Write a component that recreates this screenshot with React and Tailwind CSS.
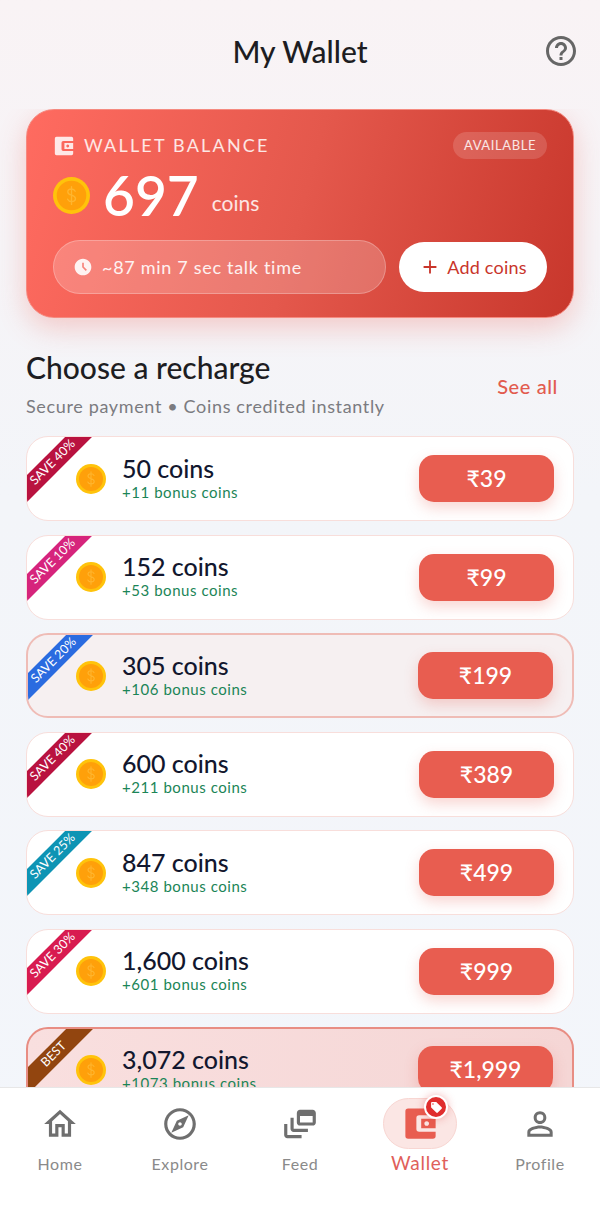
import React from "react";
import {
  MdHelpOutline, MdOutlineHome, MdOutlineExplore, MdOutlineDynamicFeed,
  MdOutlinePersonOutline, MdAccessTimeFilled, MdAdd, MdLocalOffer,
} from "react-icons/md";

const PACKS = [
  { coins: "50 coins", bonus: "+11 bonus coins", price: "₹39", tag: "SAVE 40%", ribbon: "bg-[#b9123f]" },
  { coins: "152 coins", bonus: "+53 bonus coins", price: "₹99", tag: "SAVE 10%", ribbon: "bg-[#d6247c]" },
  { coins: "305 coins", bonus: "+106 bonus coins", price: "₹199", tag: "SAVE 20%", ribbon: "bg-[#2a6be0]", tone: "soft" },
  { coins: "600 coins", bonus: "+211 bonus coins", price: "₹389", tag: "SAVE 40%", ribbon: "bg-[#b9123f]" },
  { coins: "847 coins", bonus: "+348 bonus coins", price: "₹499", tag: "SAVE 25%", ribbon: "bg-[#0e94b4]" },
  { coins: "1,600 coins", bonus: "+601 bonus coins", price: "₹999", tag: "SAVE 30%", ribbon: "bg-[#d81b50]" },
  { coins: "3,072 coins", bonus: "+1073 bonus coins", price: "₹1,999", tag: "BEST", ribbon: "bg-[#92450f]", tone: "best" },
];

const TONES = {
  plain: "bg-white border border-[#f8dedb] pl-[49px]",
  soft: "bg-[#f6f0f1] border-2 border-[#efbcb6] pl-[48px]",
  best: "bg-gradient-to-r from-[#f9dfdf] to-[#f5d6d5] border-2 border-[#e88d83] pl-[48px]",
};

function Coin({ size }) {
  return (
    <svg width={size} height={size} viewBox="0 0 30 30" className="shrink-0">
      <circle cx="15" cy="15" r="15" fill="#ffc30b" />
      <circle cx="15" cy="15" r="12" fill="#ffa00a" />
      <path
        d="M18 11.5c-.6-1.2-1.7-1.8-3-1.8-1.7 0-3 .9-3 2.4 0 3.4 6.2 1.9 6.2 5.3 0 1.5-1.4 2.5-3.2 2.5-1.4 0-2.6-.7-3.2-1.9M15 7.8v14.4"
        fill="none"
        stroke="#ffb52e"
        strokeWidth="1.1"
        strokeLinecap="round"
      />
    </svg>
  );
}

// Solid wallet with an outlined clasp on its right side.
function WalletGlyph({ size, className }) {
  return (
    <svg width={size} height={size} viewBox="0 0 24 24" className={className}>
      <path
        fillRule="evenodd"
        fill="currentColor"
        d="M3 1h18a2 2 0 0 1 2 2v18a2 2 0 0 1-2 2H3a2 2 0 0 1-2-2V3a2 2 0 0 1 2-2zM11 6a2 2 0 0 0-2 2v8a2 2 0 0 0 2 2h12V6zM12.5 8.5H23v7H12.5zM16.5 10.3a1.7 1.7 0 1 0 .01 0z"
      />
    </svg>
  );
}

function PackCard({ pack }) {
  const tone = TONES[pack.tone || "plain"];
  return (
    <div className={`relative h-[85px] shrink-0 overflow-hidden rounded-[22px] flex items-center pr-[19px] ${tone}`}>
      <div className={`absolute left-[-30px] top-[16px] w-[112px] h-[19px] -rotate-45 flex items-center justify-center text-white text-[12.5px] leading-none ${pack.ribbon}`}>
        {pack.tag}
      </div>
      <Coin size={30} />
      <div className="ml-[16px] -mt-[3px] flex flex-col">
        <span className="text-[25px] leading-[29px] font-medium text-[#12172e]">{pack.coins}</span>
        <span className="text-[15px] leading-[18px] tracking-[0.55px] text-[#1b8557]">{pack.bonus}</span>
      </div>
      <button className="ml-auto w-[135px] h-[47px] rounded-[15px] bg-[#e85d50] text-white text-[23px] font-medium flex items-center justify-center shadow-[0_6px_14px_rgba(232,93,80,0.25)]">
        {pack.price}
      </button>
    </div>
  );
}

function NavItem({ icon: Icon, label }) {
  return (
    <div className="flex-1 flex flex-col items-center pt-[17px]">
      <Icon size={38} className="text-[#6f6f6f]" />
      <span className="mt-[11px] text-[16px] leading-[20px] tracking-[0.55px] text-[#8a8a8a]">{label}</span>
    </div>
  );
}

export default function App() {
  return (
    <div className="w-[600px] h-[1232px] overflow-hidden flex flex-col bg-gradient-to-b from-[#f9f3f5] via-[#f3f5f9] via-40% to-[#f3f6fb] font-['Lato','Noto_Sans',sans-serif]">
      <header className="h-[109px] shrink-0 px-[21px] pb-[7px] relative flex items-center justify-center">
        <h1 className="text-[30px] font-medium text-[#1d1d22]">My Wallet</h1>
        <MdHelpOutline size={36} className="absolute right-[21px] top-[33px] text-[#666]" />
      </header>

      <main className="flex-1 min-h-0 overflow-hidden px-[26px] flex flex-col">
        <section className="h-[209px] shrink-0 rounded-[28px] border border-[#f58a80] bg-[linear-gradient(105deg,#ff6b60_0%,#e4584c_50%,#c8372c_100%)] px-[26px] pt-[22px] shadow-[0_10px_28px_rgba(236,90,80,0.28)]">
          <div className="flex items-center justify-between h-[27px]">
            <div className="flex items-center">
              <WalletGlyph size={20} className="text-white/85 ml-[1px]" />
              <span className="ml-[10px] text-[18px] tracking-[2.2px] text-white/85">WALLET BALANCE</span>
            </div>
            <span className="w-[94px] h-[27px] rounded-full bg-white/15 text-white/85 text-[13px] tracking-[0.6px] flex items-center justify-center">AVAILABLE</span>
          </div>
          <div className="flex items-center mt-[8px] h-[56px]">
            <Coin size={37} />
            <span className="ml-[13px] text-[55px] leading-none font-semibold text-white">697</span>
            <span className="ml-[13px] mt-[16px] text-[21px] text-white/85">coins</span>
          </div>
          <div className="flex items-center justify-between mt-[17px]">
            <div className="w-[333px] h-[54px] rounded-full bg-white/20 border border-white/25 flex items-center pl-[19px] text-white/90 text-[18px] tracking-[0.7px]">
              <MdAccessTimeFilled size={20} className="text-white/90" />
              <span className="ml-[9px]">~87 min 7 sec talk time</span>
            </div>
            <button className="w-[148px] h-[50px] rounded-full bg-white text-[#c9352b] text-[18px] tracking-[0.2px] flex items-center justify-center">
              <MdAdd size={22} />
              <span className="ml-[6px]">Add coins</span>
            </button>
          </div>
        </section>

        <div className="mt-[30px] h-[73px] shrink-0 relative">
          <h2 className="text-[30px] leading-[38px] font-medium text-[#1d1d22]">Choose a recharge</h2>
          <p className="text-[18px] leading-[22px] mt-[9px] tracking-[0.65px] text-[#7b7b80]">Secure payment • Coins credited instantly</p>
          <span className="absolute right-[16px] top-[23px] text-[20px] tracking-[0.6px] font-medium text-[#e25b4e]">See all</span>
        </div>

        <div className="mt-[15px] flex flex-col gap-[13.5px]">
          {PACKS.map((p) => (
            <PackCard key={p.coins} pack={p} />
          ))}
        </div>
      </main>

      <nav className="h-[145px] shrink-0 bg-white border-t border-[#e7e7e7] flex relative">
        <NavItem icon={MdOutlineHome} label="Home" />
        <NavItem icon={MdOutlineExplore} label="Explore" />
        <NavItem icon={MdOutlineDynamicFeed} label="Feed" />
        <div className="flex-1 flex flex-col items-center pt-[10px]">
          <div className="relative w-[74px] h-[51px] rounded-full bg-[#fbe6e4] border border-[#f8d6d2] flex items-center justify-center">
            <WalletGlyph size={33} className="text-[#e85d50]" />
            <span className="absolute right-[8px] top-[-4px] w-[24px] h-[24px] rounded-full bg-[#e02d2d] border-2 border-white flex items-center justify-center shadow-[0_0_8px_rgba(224,45,45,0.35)]">
              <MdLocalOffer size={13} className="text-white" />
            </span>
          </div>
          <span className="mt-[2px] text-[19px] leading-[24px] tracking-[0.7px] text-[#e0605a]">Wallet</span>
        </div>
        <NavItem icon={MdOutlinePersonOutline} label="Profile" />
      </nav>
    </div>
  );
}
